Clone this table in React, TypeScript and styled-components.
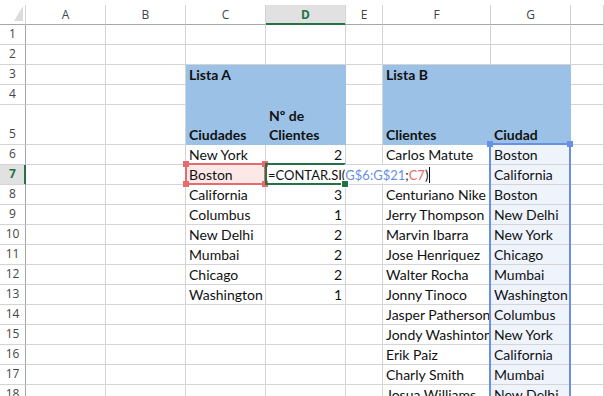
import React from 'react';
import styled, { createGlobalStyle, css } from 'styled-components';

const GlobalStyle = createGlobalStyle`
  html, body {
    margin: 0;
    padding: 0;
    background: #ffffff;
  }
  body {
    width: 604px;
    height: 396px;
    overflow: hidden;
  }
`;

const GREEN = '#217346';
const GRID = '#d4d4d4';
const HEAD_EDGE = '#a6a6a6';
const TITLE_BLUE = '#9bc2e6';
const RANGE_BLUE = '#6790e6';
const REF_RED = '#e46c6c';

type Fill = 'title' | 'range' | 'ref';
type Corner = 'tl' | 'tr' | 'bl' | 'br';

interface CellSpec {
  text?: string;
  bold?: boolean;
  right?: boolean;
  wrap?: boolean;
  fill?: Fill;
}

const COLS = ['A', 'B', 'C', 'D', 'E', 'F', 'G', 'H'];
const ROW_COUNT = 18;
const ACTIVE_COL = 'D';
const ACTIVE_ROW = 7;

const citiesA = ['New York', 'Boston', 'California', 'Columbus', 'New Delhi', 'Mumbai', 'Chicago', 'Washington'];
const counts = ['2', '', '3', '1', '2', '2', '2', '1'];
const clientes = [
  'Carlos Matute',
  '',
  'Centuriano Nike',
  'Jerry Thompson',
  'Marvin Ibarra',
  'Jose Henriquez',
  'Walter Rocha',
  'Jonny Tinoco',
  'Jasper Patherson',
  'Jondy Washinton',
  'Erik Paiz',
  'Charly Smith',
  'Josua Williams',
];
const ciudades = [
  'Boston',
  'California',
  'Boston',
  'New Delhi',
  'New York',
  'Chicago',
  'Mumbai',
  'Washington',
  'Columbus',
  'New York',
  'California',
  'Mumbai',
  'New Delhi',
];

const buildRow = (r: number): Record<string, CellSpec> => {
  const row: Record<string, CellSpec> = {};
  if (r === 3) {
    row.C = { text: 'Lista A', bold: true, fill: 'title' };
    row.D = { fill: 'title' };
    row.F = { text: 'Lista B', bold: true, fill: 'title' };
    row.G = { fill: 'title' };
  }
  if (r === 4) {
    row.C = { fill: 'title' };
    row.D = { fill: 'title' };
    row.F = { fill: 'title' };
    row.G = { fill: 'title' };
  }
  if (r === 5) {
    row.C = { text: 'Ciudades', bold: true, fill: 'title' };
    row.D = { text: 'Nº de Clientes', bold: true, wrap: true, fill: 'title' };
    row.F = { text: 'Clientes', bold: true, fill: 'title' };
    row.G = { text: 'Ciudad', bold: true, fill: 'title' };
  }
  if (r >= 6) {
    const i = r - 6;
    if (i < citiesA.length) {
      row.C = { text: citiesA[i], fill: r === 7 ? 'ref' : undefined };
      row.D = { text: counts[i], right: true };
    }
    row.F = { text: clientes[i] };
    row.G = { text: ciudades[i], fill: 'range' };
  }
  return row;
};

const rows = Array.from({ length: ROW_COUNT }, (_, i) => i + 1);

const Sheet = styled.div`
  position: relative;
  display: grid;
  grid-template-columns: 26px 80px 80px 80px 80px 37px 108px 80px 1fr;
  grid-template-rows: 20px repeat(4, 20px) 40px repeat(13, 20px);
  padding-top: 5px;
  width: 604px;
  height: 396px;
  box-sizing: border-box;
  overflow: hidden;
  background: #ffffff;
`;

const SelectAll = styled.div`
  box-sizing: border-box;
  border-right: 1px solid ${GRID};
  border-bottom: 1px solid ${HEAD_EDGE};
  svg {
    display: block;
  }
`;

const ColHead = styled.div<{ $active?: boolean }>`
  box-sizing: border-box;
  display: flex;
  align-items: center;
  justify-content: center;
  border-right: 1px solid ${GRID};
  border-bottom: 1px solid ${HEAD_EDGE};
  font-family: 'Open Sans', 'Noto Sans', sans-serif;
  font-size: 12px;
  color: #444444;
  ${(p) =>
    p.$active &&
    css`
      background: #e1e1e1;
      border-bottom-color: ${GREEN};
      box-shadow: inset 0 -1px 0 ${GREEN};
      color: ${GREEN};
      font-weight: 700;
    `}
`;

const RowHead = styled.div<{ $active?: boolean }>`
  box-sizing: border-box;
  display: flex;
  align-items: flex-end;
  justify-content: center;
  padding-bottom: 1px;
  border-right: 1px solid ${HEAD_EDGE};
  border-bottom: 1px solid ${GRID};
  font-family: 'Open Sans', 'Noto Sans', sans-serif;
  font-size: 12px;
  line-height: 18px;
  color: #444444;
  ${(p) =>
    p.$active &&
    css`
      background: #e1e1e1;
      border-right-color: ${GREEN};
      box-shadow: inset -1px 0 0 ${GREEN};
      color: ${GREEN};
      font-weight: 700;
    `}
`;

const fillStyles: Record<Fill, ReturnType<typeof css>> = {
  title: css`
    background: ${TITLE_BLUE};
    border-color: ${TITLE_BLUE};
  `,
  range: css`
    background: #eef3fc;
  `,
  ref: css`
    background: #fde8e8;
  `,
};

const Cell = styled.div<{ $fill?: Fill; $bold?: boolean; $right?: boolean; $wrap?: boolean }>`
  box-sizing: border-box;
  display: flex;
  align-items: flex-end;
  justify-content: ${(p) => (p.$right ? 'flex-end' : 'flex-start')};
  padding: 0 3px ${(p) => (p.$wrap ? 0 : 1)}px 3px;
  border-right: 1px solid ${GRID};
  border-bottom: 1px solid ${GRID};
  overflow: hidden;
  white-space: ${(p) => (p.$wrap ? 'normal' : 'nowrap')};
  font-family: Lato, 'Liberation Sans', sans-serif;
  font-size: 14px;
  line-height: ${(p) => (p.$wrap ? '19px' : '17px')};
  font-weight: ${(p) => (p.$bold ? 700 : 400)};
  color: #111111;
  ${(p) => p.$fill && fillStyles[p.$fill]}
`;

// selection outline laid over the grid; sides can be dropped where the editor spills over
const Outline = styled.div<{ $color: string; $x: number; $y: number; $w: number; $h: number; $open?: boolean }>`
  position: absolute;
  left: ${(p) => p.$x}px;
  top: ${(p) => p.$y}px;
  width: ${(p) => p.$w}px;
  height: ${(p) => p.$h}px;
  box-sizing: border-box;
  border: 2px solid ${(p) => p.$color};
  ${(p) => p.$open && 'border-right-color: transparent;'}
  pointer-events: none;
  z-index: 3;
`;

const cornerPos: Record<Corner, string> = {
  tl: 'left: -4px; top: -4px;',
  tr: 'right: -4px; top: -4px;',
  bl: 'left: -4px; bottom: -4px;',
  br: 'right: -4px; bottom: -4px;',
};

const Handle = styled.span<{ $color: string; $at: Corner; $outline?: boolean }>`
  position: absolute;
  ${(p) => cornerPos[p.$at]}
  width: 6px;
  height: 6px;
  background: ${(p) => p.$color};
  ${(p) => p.$outline && 'box-shadow: 0 0 0 1px #ffffff;'}
`;

const Editor = styled.div`
  position: absolute;
  left: 267px;
  top: 165px;
  width: 222px;
  height: 18px;
  display: flex;
  align-items: flex-end;
  padding-left: 1px;
  box-sizing: border-box;
  background: #ffffff;
  font-family: Lato, 'Liberation Sans', sans-serif;
  font-size: 13px;
  line-height: 16px;
  color: #111111;
  white-space: nowrap;
  z-index: 2;
`;

const Ref = styled.span<{ $color: string }>`
  color: ${(p) => p.$color};
`;

const Caret = styled.span`
  display: inline-block;
  width: 1px;
  height: 16px;
  margin-left: 1px;
  background: #000000;
`;

const App = () => {
  return (
    <>
      <GlobalStyle />
      <Sheet>
        <SelectAll>
          <svg width="26" height="19" viewBox="0 0 26 19">
            <polygon points="23,1 23,16 14,16" fill="#dcdcdc" />
          </svg>
        </SelectAll>
        {COLS.map((c) => (
          <ColHead key={c} $active={c === ACTIVE_COL}>
            {c === 'H' ? '' : c}
          </ColHead>
        ))}
        {rows.map((r) => {
          const row = buildRow(r);
          return (
            <React.Fragment key={r}>
              <RowHead $active={r === ACTIVE_ROW}>{r}</RowHead>
              {COLS.map((c) => {
                const spec = row[c] || {};
                return (
                  <Cell
                    key={c}
                    $fill={spec.fill}
                    $bold={spec.bold}
                    $right={spec.right}
                    $wrap={spec.wrap}
                  >
                    {spec.text}
                  </Cell>
                );
              })}
            </React.Fragment>
          );
        })}

        <Editor>
          =CONTAR.SI(<Ref $color={RANGE_BLUE}>G$6:G$21</Ref>;<Ref $color={REF_RED}>C7</Ref>)
          <Caret />
        </Editor>

        <Outline $color={REF_RED} $x={185} $y={163} $w={81} $h={22}>
          <Handle $color={REF_RED} $at="tl" />
          <Handle $color={REF_RED} $at="tr" />
          <Handle $color={REF_RED} $at="bl" />
          <Handle $color={REF_RED} $at="br" />
        </Outline>

        <Outline $color={GREEN} $x={265} $y={163} $w={81} $h={22} $open>
          <Handle $color={GREEN} $at="br" $outline />
        </Outline>

        <Outline $color={RANGE_BLUE} $x={489} $y={143} $w={82} $h={300}>
          <Handle $color={RANGE_BLUE} $at="tl" />
          <Handle $color={RANGE_BLUE} $at="tr" />
        </Outline>
      </Sheet>
    </>
  );
};

export default App;
